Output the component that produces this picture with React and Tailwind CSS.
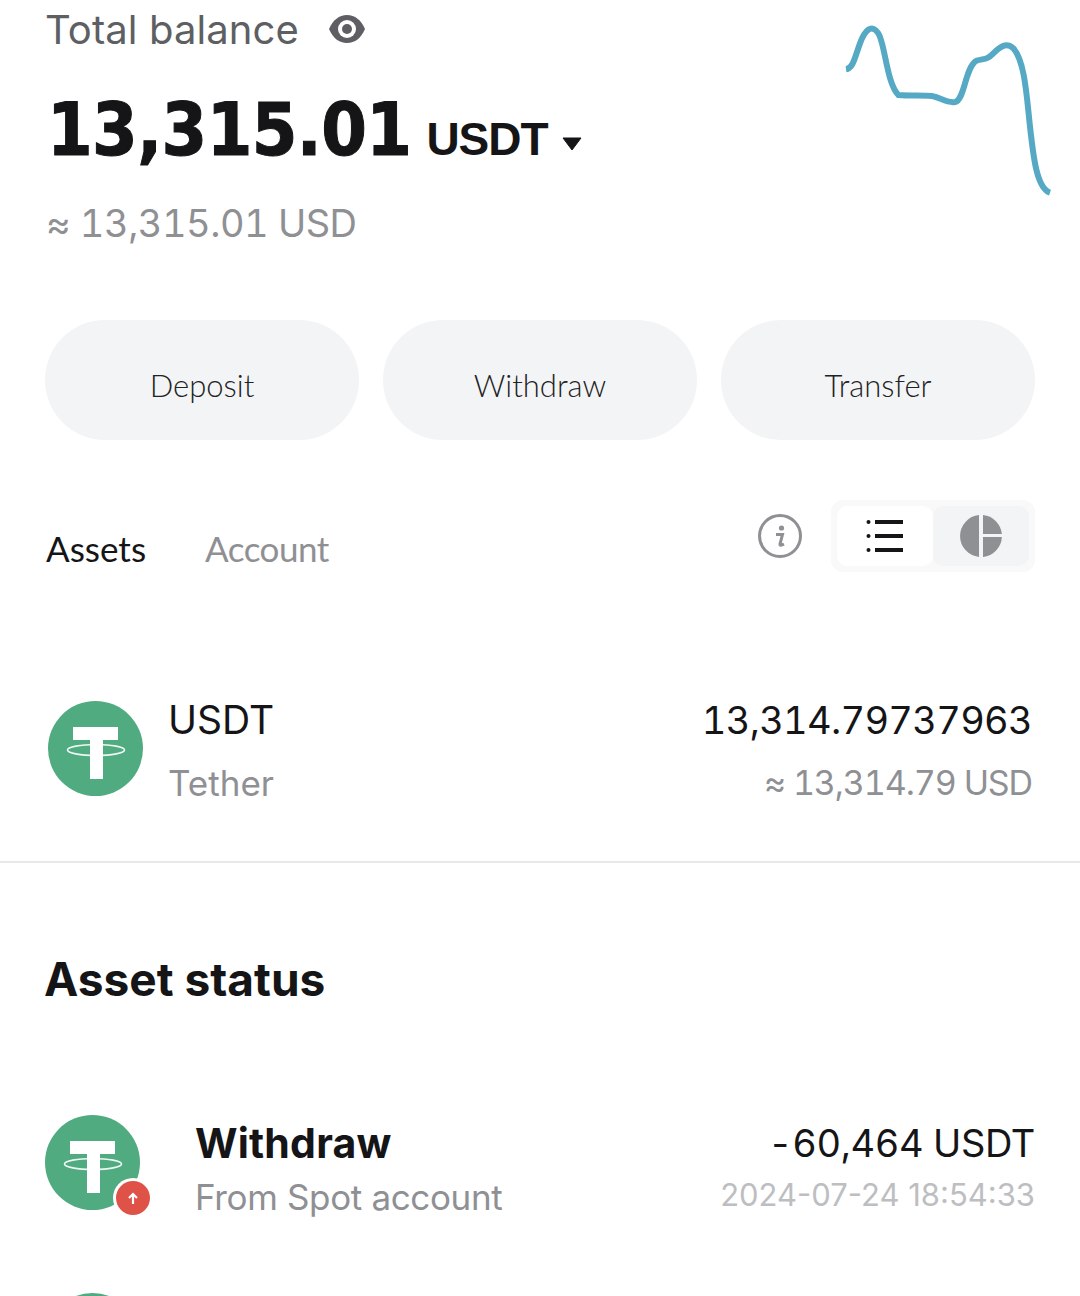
import React from 'react';

const TetherIcon = ({ badge }) => (
    <div className="relative w-[95px] h-[95px] shrink-0">
        <svg viewBox="0 0 95 95" className="w-[95px] h-[95px]">
            <circle cx="47.5" cy="47.5" r="47.5" fill="#50AB80" />
            <path d="M25 26H70V39H55V78H42V39H25Z" fill="#fff" />
            <ellipse cx="48" cy="49" rx="28.5" ry="5.5" fill="none" stroke="#fff" strokeWidth="1.6" opacity="0.9" />
        </svg>
        {badge && (
            <div className="absolute left-[68px] top-[63px] w-[40px] h-[40px] rounded-full bg-white flex items-center justify-center">
                <div className="w-[34px] h-[34px] rounded-full bg-[#DF5248] flex items-center justify-center">
                    <svg viewBox="0 0 14 14" className="w-[14px] h-[14px]">
                        <path d="M7 13V3M3 7l4-4 4 4" fill="none" stroke="#fff" strokeWidth="2.2" />
                    </svg>
                </div>
            </div>
        )}
    </div>
);

const hand = "font-['Lato',sans-serif]";

const App = () => {
    return (
        <div className="w-[1080px] h-[1296px] overflow-hidden bg-white font-['Inter','Liberation_Sans',sans-serif] text-[#151517]">
            <div className="flex justify-between h-[320px] pl-[45px] pr-[10px]">
                <div>
                    <div className="flex items-center h-[60px] text-[40px] leading-[60px] tracking-[0.1px] text-[#5E5F63]">
                        Total balance
                        <svg viewBox="0 0 38 30" className="w-[38px] h-[30px] ml-[29px] -mt-[2px]">
                            <path d="M1 15C5 6 11 1 19 1s14 5 18 14c-4 9-10 14-18 14S5 24 1 15Z" fill="#5E5F63" />
                            <circle cx="19" cy="15" r="9" fill="#fff" />
                            <circle cx="19" cy="15" r="5" fill="#5E5F63" />
                        </svg>
                    </div>
                    <div className="flex items-baseline mt-[18px] h-[104px] pl-[2px]">
                        <span className="font-['DejaVu_Sans_Condensed'] font-bold text-[73px] leading-[104px] tracking-[-0.6px] [-webkit-text-stroke:1px_#151517]">13,315.01</span>
                        <span className="ml-[15px] font-['Liberation_Sans'] font-bold text-[46px] tracking-[-1px]">USDT</span>
                        <svg viewBox="0 0 20 14" className="w-[20px] h-[14px] ml-[14px] self-center mt-[28px]">
                            <path d="M1 1H19L10 13Z" fill="#151517" stroke="#151517" strokeLinejoin="round" />
                        </svg>
                    </div>
                    <div className="mt-[16px] pl-[1px] text-[38px] leading-[50px] tabular-nums tracking-[-0.5px] text-[#8F9094]">≈ 13,315.01 USD</div>
                </div>
                <svg viewBox="0 0 720 600" className="w-[240px] h-[200px] mt-[10px]">
                    <path
                        d="M48 178C70 175 75 140 90 100C105 60 125 40 145 70C165 100 170 220 205 255C240 258 280 255 305 258C330 262 350 280 375 276C405 270 405 170 440 152C465 145 470 150 490 130C510 110 530 95 550 115C585 155 590 260 600 350C610 440 620 535 660 548"
                        fill="none"
                        stroke="#56A9C4"
                        strokeWidth="18"
                    />
                </svg>
            </div>

            <div className="grid grid-cols-3 gap-[24px] px-[45px]">
                {['Deposit', 'Withdraw', 'Transfer'].map((label) => (
                    <button key={label} className={`h-[120px] pt-[10px] rounded-[60px] bg-[#F3F4F6] text-[31px] font-light text-[#222] ${hand}`}>
                        {label}
                    </button>
                ))}
            </div>

            <div className="flex items-center justify-between mt-[60px] h-[72px] pl-[46px] pr-[45px]">
                <div className={`flex gap-[59px] text-[35px] mt-[24px] ${hand}`}>
                    <span>Assets</span>
                    <span className="text-[#8F9094] tracking-[-0.5px]">Account</span>
                </div>
                <div className="flex items-center">
                    <svg viewBox="0 0 44 44" className="w-[44px] h-[44px] mr-[29px]">
                        <circle cx="22" cy="22" r="20.5" fill="none" stroke="#8F9094" strokeWidth="3" />
                        <circle cx="23.5" cy="14" r="2.6" fill="#8F9094" />
                        <path d="M18 20.5h6.5L22 30c-.3 1.4 1 1.6 4 .2" fill="none" stroke="#8F9094" strokeWidth="3" />
                    </svg>
                    <div className="flex w-[204px] h-[72px] rounded-[12px] bg-[#F9F9FA] p-[6px]">
                        <div className="flex-1 rounded-[10px] bg-white flex items-center justify-center">
                            <svg viewBox="0 0 38 34" className="w-[38px] h-[34px]">
                                <g fill="#151517">
                                    <circle cx="2.5" cy="3" r="2" />
                                    <circle cx="2.5" cy="17" r="2" />
                                    <circle cx="2.5" cy="31" r="2" />
                                    <rect x="9" y="1" width="28" height="4" />
                                    <rect x="9" y="15" width="28" height="4" />
                                    <rect x="9" y="29" width="28" height="4" />
                                </g>
                            </svg>
                        </div>
                        <div className="flex-1 rounded-[10px] bg-[#F3F4F6] flex items-center justify-center">
                            <svg viewBox="0 0 42 42" className="w-[42px] h-[42px]">
                                <g fill="#8F9094">
                                    <path d="M19 0.1A21 21 0 0 0 19 41.9Z" />
                                    <path d="M23 0.1A21 21 0 0 1 41.9 19H23Z" />
                                    <path d="M23 22H41.9A21 21 0 0 1 23 41.9Z" />
                                </g>
                            </svg>
                        </div>
                    </div>
                </div>
            </div>

            <div className="flex items-center mt-[121px] pl-[48px] pr-[48px]">
                <TetherIcon />
                <div className="ml-[25px] flex-1 pt-[4px]">
                    <div className="text-[39px] leading-[46px]">USDT</div>
                    <div className="mt-[19px] text-[35px] leading-[42px] text-[#8F9094]">Tether</div>
                </div>
                <div className="text-right pt-[4px]">
                    <div className="text-[38px] leading-[46px] tabular-nums tracking-[-0.7px]">13,314.79737963</div>
                    <div className="mt-[19px] text-[34px] leading-[42px] tabular-nums tracking-[-1.1px] text-[#8F9094]">≈ 13,314.79 USD</div>
                </div>
            </div>

            <div className="h-[2px] bg-[#E8E8EA] mt-[57px]"></div>

            <div className="mt-[88px] pl-[44px] text-[46px] leading-[56px] font-bold">Asset status</div>

            <div className="flex items-center mt-[99px] pl-[45px] pr-[45px]">
                <TetherIcon badge />
                <div className="ml-[55px] flex-1 pt-[12px]">
                    <div className="text-[41px] leading-[50px] font-bold tracking-[0.2px]">Withdraw</div>
                    <div className="mt-[8px] text-[35px] leading-[42px] tracking-[-0.35px] text-[#8F9094]">From Spot account</div>
                </div>
                <div className="text-right pt-[12px] pb-[2px]">
                    <div className="text-[38px] leading-[50px] tabular-nums tracking-[-0.4px]">-60,464 USDT</div>
                    <div className="mt-[6px] text-[31px] leading-[42px] text-[#BDBEC1]">2024-07-24 18:54:33</div>
                </div>
            </div>

            <div className="mt-[75px] ml-[45px]">
                <TetherIcon />
            </div>
        </div>
    );
};

export default App;
